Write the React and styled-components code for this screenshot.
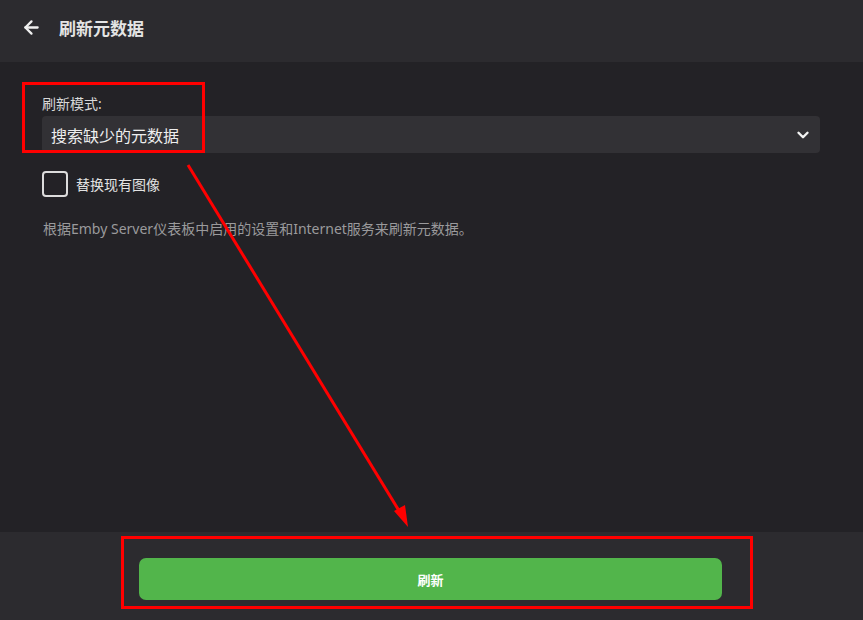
import styled, { createGlobalStyle } from 'styled-components';
import { ArrowLeft, ChevronDown } from 'lucide-react';

const GlobalStyle = createGlobalStyle`
  html, body {
    margin: 0;
    padding: 0;
    background: #232226;
  }
  body {
    font-family: "Noto Sans", "Noto Sans CJK SC", sans-serif;
  }
`;

const App = () => {
  return (
    <>
      <GlobalStyle />
      <Page>
        <Header>
          <BackButton>
            <ArrowLeft size={21} strokeWidth={2.6} />
          </BackButton>
          <Title>刷新元数据</Title>
        </Header>

        <Main>
          <Label>刷新模式:</Label>
          <Select>
            <span>搜索缺少的元数据</span>
            <ChevronDown size={18} strokeWidth={3.2} />
          </Select>

          <CheckRow>
            <CheckBox />
            <CheckLabel>替换现有图像</CheckLabel>
          </CheckRow>

          <Description>
            根据Emby Server仪表板中启用的设置和Internet服务来刷新元数据。
          </Description>
        </Main>

        <Footer>
          <SubmitButton>刷新</SubmitButton>
        </Footer>

        <Annotations width="863" height="620" viewBox="0 0 863 620">
          <rect x="23.5" y="83.5" width="180" height="68" fill="none" stroke="#ff0000" strokeWidth="3" />
          <rect x="122.5" y="537.5" width="629" height="70" fill="none" stroke="#ff0000" strokeWidth="3" />
          <line x1="188" y1="165" x2="401" y2="514" stroke="#ff0000" strokeWidth="3" />
          <polygon points="408,527 394,511 405,505" fill="#ff0000" />
        </Annotations>
      </Page>
    </>
  );
};

export default App;

const Page = styled.div`
  position: relative;
  display: flex;
  flex-direction: column;
  width: 100%;
  height: 620px;
  overflow: hidden;
  background: #232226;
`;

const Header = styled.div`
  display: flex;
  align-items: center;
  height: 62px;
  padding: 0 0 7px 21px;
  box-sizing: border-box;
  background: #2c2b2f;
  color: #e6e6e6;
`;

const BackButton = styled.div`
  display: flex;
  align-items: center;
  justify-content: center;
  width: 21px;
  height: 21px;
  margin-right: 17px;
  color: #f0f0f0;
`;

const Title = styled.div`
  font-size: 17px;
  font-weight: 700;
  color: #e4e4e4;
`;

const Main = styled.div`
  flex: 1;
  display: flex;
  flex-direction: column;
  padding: 31px 43px 0 42px;
`;

const Label = styled.div`
  font-size: 14px;
  line-height: 21px;
  color: #d8d8d8;
  margin-bottom: 2px;
`;

const Select = styled.div`
  display: flex;
  align-items: center;
  justify-content: space-between;
  height: 37px;
  padding: 0 8px 0 9px;
  border-radius: 4px;
  background: #323135;
  color: #eeeeee;
  font-size: 16px;

  svg {
    color: #f2f2f2;
  }
`;

const CheckRow = styled.div`
  display: flex;
  align-items: center;
  margin-top: 18px;
`;

const CheckBox = styled.div`
  width: 22px;
  height: 22px;
  border: 2px solid #dcdcdc;
  border-radius: 4px;
`;

const CheckLabel = styled.div`
  margin-left: 8px;
  font-size: 14px;
  color: #e2e2e2;
`;

const Description = styled.div`
  margin-top: 21px;
  font-size: 14px;
  line-height: 21px;
  color: #9a9a9c;
  padding-left: 1px;
`;

const Footer = styled.div`
  display: flex;
  align-items: flex-start;
  height: 88px;
  padding: 26px 141px 0 139px;
  box-sizing: border-box;
  background: #2c2b2f;
`;

const SubmitButton = styled.div`
  flex: 1;
  display: flex;
  align-items: center;
  justify-content: center;
  height: 42px;
  border-radius: 7px;
  background: #52b54b;
  color: #ffffff;
  font-size: 13px;
  font-weight: 700;
`;

const Annotations = styled.svg`
  position: absolute;
  top: 0;
  left: 0;
  pointer-events: none;
`;
